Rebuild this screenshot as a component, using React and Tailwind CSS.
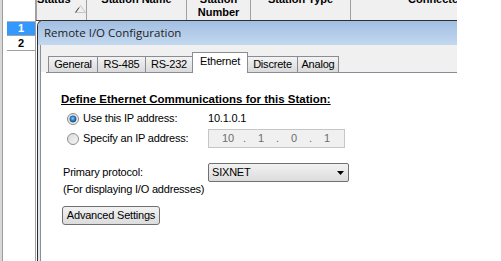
import React from 'react';

const TABS = [
  { id: 'general', label: 'General', w: 'w-[50px]' },
  { id: 'rs485', label: 'RS-485', w: 'w-[49px]' },
  { id: 'rs232', label: 'RS-232', w: 'w-[48px]' },
  { id: 'ethernet', label: 'Ethernet', w: 'w-[56px]' },
  { id: 'discrete', label: 'Discrete', w: 'w-[51px]' },
  { id: 'analog', label: 'Analog', w: 'w-[42px]' },
];

function Radio({ checked, id }) {
  return (
    <svg width="12" height="12" viewBox="0 0 12 12" className="shrink-0">
      <defs>
        <linearGradient id={`ring-${id}`} x1="0" y1="0" x2="1" y2="1">
          <stop offset="0" stopColor="#d9d9d9" />
          <stop offset="1" stopColor="#f7f7f7" />
        </linearGradient>
        <radialGradient id={`dot-${id}`} cx="0.45" cy="0.4" r="0.6">
          <stop offset="0" stopColor="#8fd0ff" />
          <stop offset="0.5" stopColor="#2f86cf" />
          <stop offset="1" stopColor="#174f86" />
        </radialGradient>
      </defs>
      <circle cx="6" cy="6" r="5.5" fill={`url(#ring-${id})`} stroke="#8d8d8d" />
      {checked && <circle cx="6" cy="6" r="3.2" fill={`url(#dot-${id})`} stroke="#1d4f7e" strokeWidth="0.5" />}
    </svg>
  );
}

function SortGlyph() {
  return (
    <svg width="11" height="8" viewBox="0 0 11 8" className="ml-[4px] mt-[5px] shrink-0">
      <polyline points="0.5,7.5 5.5,0.5 10.5,7.5 0.5,7.5" fill="none" stroke="#c4c4c4" />
      <line x1="0.5" y1="7.5" x2="4" y2="2.6" stroke="#3a3a3a" />
    </svg>
  );
}

export default function App() {
  return (
    <div className="w-[501px] h-[261px] bg-white flex overflow-hidden font-['Liberation_Sans',Arial,sans-serif] text-[11px] text-black">
      {/* left strip */}
      <div className="w-[3px] shrink-0 bg-[#d8d8d8] border-r border-[#9c9c9c]" />

      {/* row headers */}
      <div className="w-[33px] shrink-0 border-r border-[#a0a0a0] flex flex-col font-bold">
        <div className="h-[22px] ml-[4px] border-b border-[#b4b4b4]" />
        <div className="h-[14px] ml-[4px] bg-[#3399ff] border-b border-[#a0a0a0] text-white flex items-center justify-center leading-none">1</div>
        <div className="h-[15px] ml-[4px] border-b border-[#a0a0a0] flex items-center justify-center leading-none">2</div>
      </div>

      <div className="flex-1 flex flex-col min-w-0">
        {/* column headers */}
        <div className="flex h-[21px] w-[421px] shrink-0 bg-[#f0f0f0] border-b border-[#454545] font-bold leading-[13px]">
          <div className="w-[50px] border-l border-[#a0a0a0] overflow-hidden flex items-start">
            <div className="-mt-[7px]">Status</div>
            <SortGlyph />
          </div>
          <div className="w-[100px] border-l border-[#a0a0a0] overflow-hidden text-center">
            <div className="-mt-[7px]">Station Name</div>
          </div>
          <div className="w-[64px] border-l border-[#a0a0a0] overflow-hidden text-center">
            <div className="-mt-[7px]">Station<br />Number</div>
          </div>
          <div className="w-[100px] border-l border-[#a0a0a0] overflow-hidden text-center">
            <div className="-mt-[7px]">Station Type</div>
          </div>
          <div className="w-[107px] border-l border-[#a0a0a0] overflow-hidden whitespace-nowrap pl-[57px]">
            <div className="-mt-[7px]">Connected Device</div>
          </div>
        </div>

        {/* dialog window */}
        <div className="ml-px -mt-px w-[420px] flex-1 flex flex-col border-l border-t border-[#2e2e2e] rounded-tl-[6px] overflow-hidden bg-[#dfe8f2]">
          <div className="h-[24px] shrink-0 bg-linear-to-b from-[#a2bfe2] to-[#c3d8ef] flex items-center pl-[6px] font-['Open_Sans',sans-serif] text-[11.5px] leading-[16px] text-[#1e1e1e]">
            Remote I/O Configuration
          </div>
          <div className="flex-1 flex">
            <div className="w-[2px] bg-[#dfe8f2]" />
            <div className="flex-1 border-l border-[#8e8e8e] bg-white flex flex-col tracking-[-0.2px]">
              {/* tabs */}
              <div className="h-[27px] shrink-0 bg-[#f0f0f0] pl-[7px] flex items-end">
                {TABS.map((tab, i) => {
                  const active = tab.id === 'ethernet';
                  return (
                    <div
                      key={tab.id}
                      className={`${tab.w} ${i > 0 ? '-ml-px' : ''} border-t border-l border-r border-[#898c95] flex justify-center leading-[13px] ${
                        active
                          ? 'h-[21px] -mb-px bg-white relative z-10 pt-[2px]'
                          : 'h-[16px] bg-linear-to-b from-[#f3f3f3] to-[#dadada] items-center'
                      }`}
                    >
                      {tab.label}
                    </div>
                  );
                })}
              </div>

              {/* tab page */}
              <div className="ml-[5px] border-t border-[#898c95] flex-1 pl-[15px] pt-[19px] flex flex-col items-start">
                <div className="font-bold underline text-[11.5px] leading-[14px] tracking-normal">
                  Define Ethernet Communications for this Station:
                </div>

                <div className="mt-[6px] h-[13px] flex items-center leading-[13px]">
                  <div className="ml-[6px]"><Radio checked id="use" /></div>
                  <div className="ml-[4px] w-[125px]">Use this IP address:</div>
                  <div>10.1.0.1</div>
                </div>

                <div className="mt-[4px] h-[19px] flex items-center leading-[13px]">
                  <div className="ml-[6px]"><Radio id="spec" /></div>
                  <div className="ml-[4px] w-[125px]">Specify an IP address:</div>
                  <div className="w-[137px] h-[19px] border border-[#c6c6c6] bg-[#f0f0f0] pl-[6px] flex items-center text-[#6d6d6d]">
                    <span className="w-[26px] text-center">10</span>
                    <span className="w-[7px] text-center">.</span>
                    <span className="w-[26px] text-center">1</span>
                    <span className="w-[7px] text-center">.</span>
                    <span className="w-[26px] text-center">0</span>
                    <span className="w-[7px] text-center">.</span>
                    <span className="w-[26px] text-center">1</span>
                  </div>
                </div>

                <div className="mt-[15px] h-[19px] flex items-center leading-[13px]">
                  <div className="ml-[2px] w-[145px]">Primary protocol:</div>
                  <div className="w-[141px] h-[19px] border border-[#707070] rounded-[2px] bg-linear-to-b from-[#f2f2f2] to-[#dcdcdc] flex items-center pl-[3px] pr-[4px]">
                    <span className="flex-1">SIXNET</span>
                    <svg width="7" height="4" viewBox="0 0 7 4">
                      <polygon points="0,0 7,0 3.5,4" fill="#000" />
                    </svg>
                  </div>
                </div>

                <div className="mt-px ml-[2px] leading-[13px]">(For displaying I/O addresses)</div>

                <button className="mt-[10px] ml-px h-[19px] w-[98px] border border-[#707070] rounded-[3px] bg-linear-to-b from-[#f2f2f2] to-[#dcdcdc] flex items-center justify-center leading-[13px] text-black">
                  Advanced Settings
                </button>
              </div>
            </div>
          </div>
        </div>
      </div>
    </div>
  );
}
